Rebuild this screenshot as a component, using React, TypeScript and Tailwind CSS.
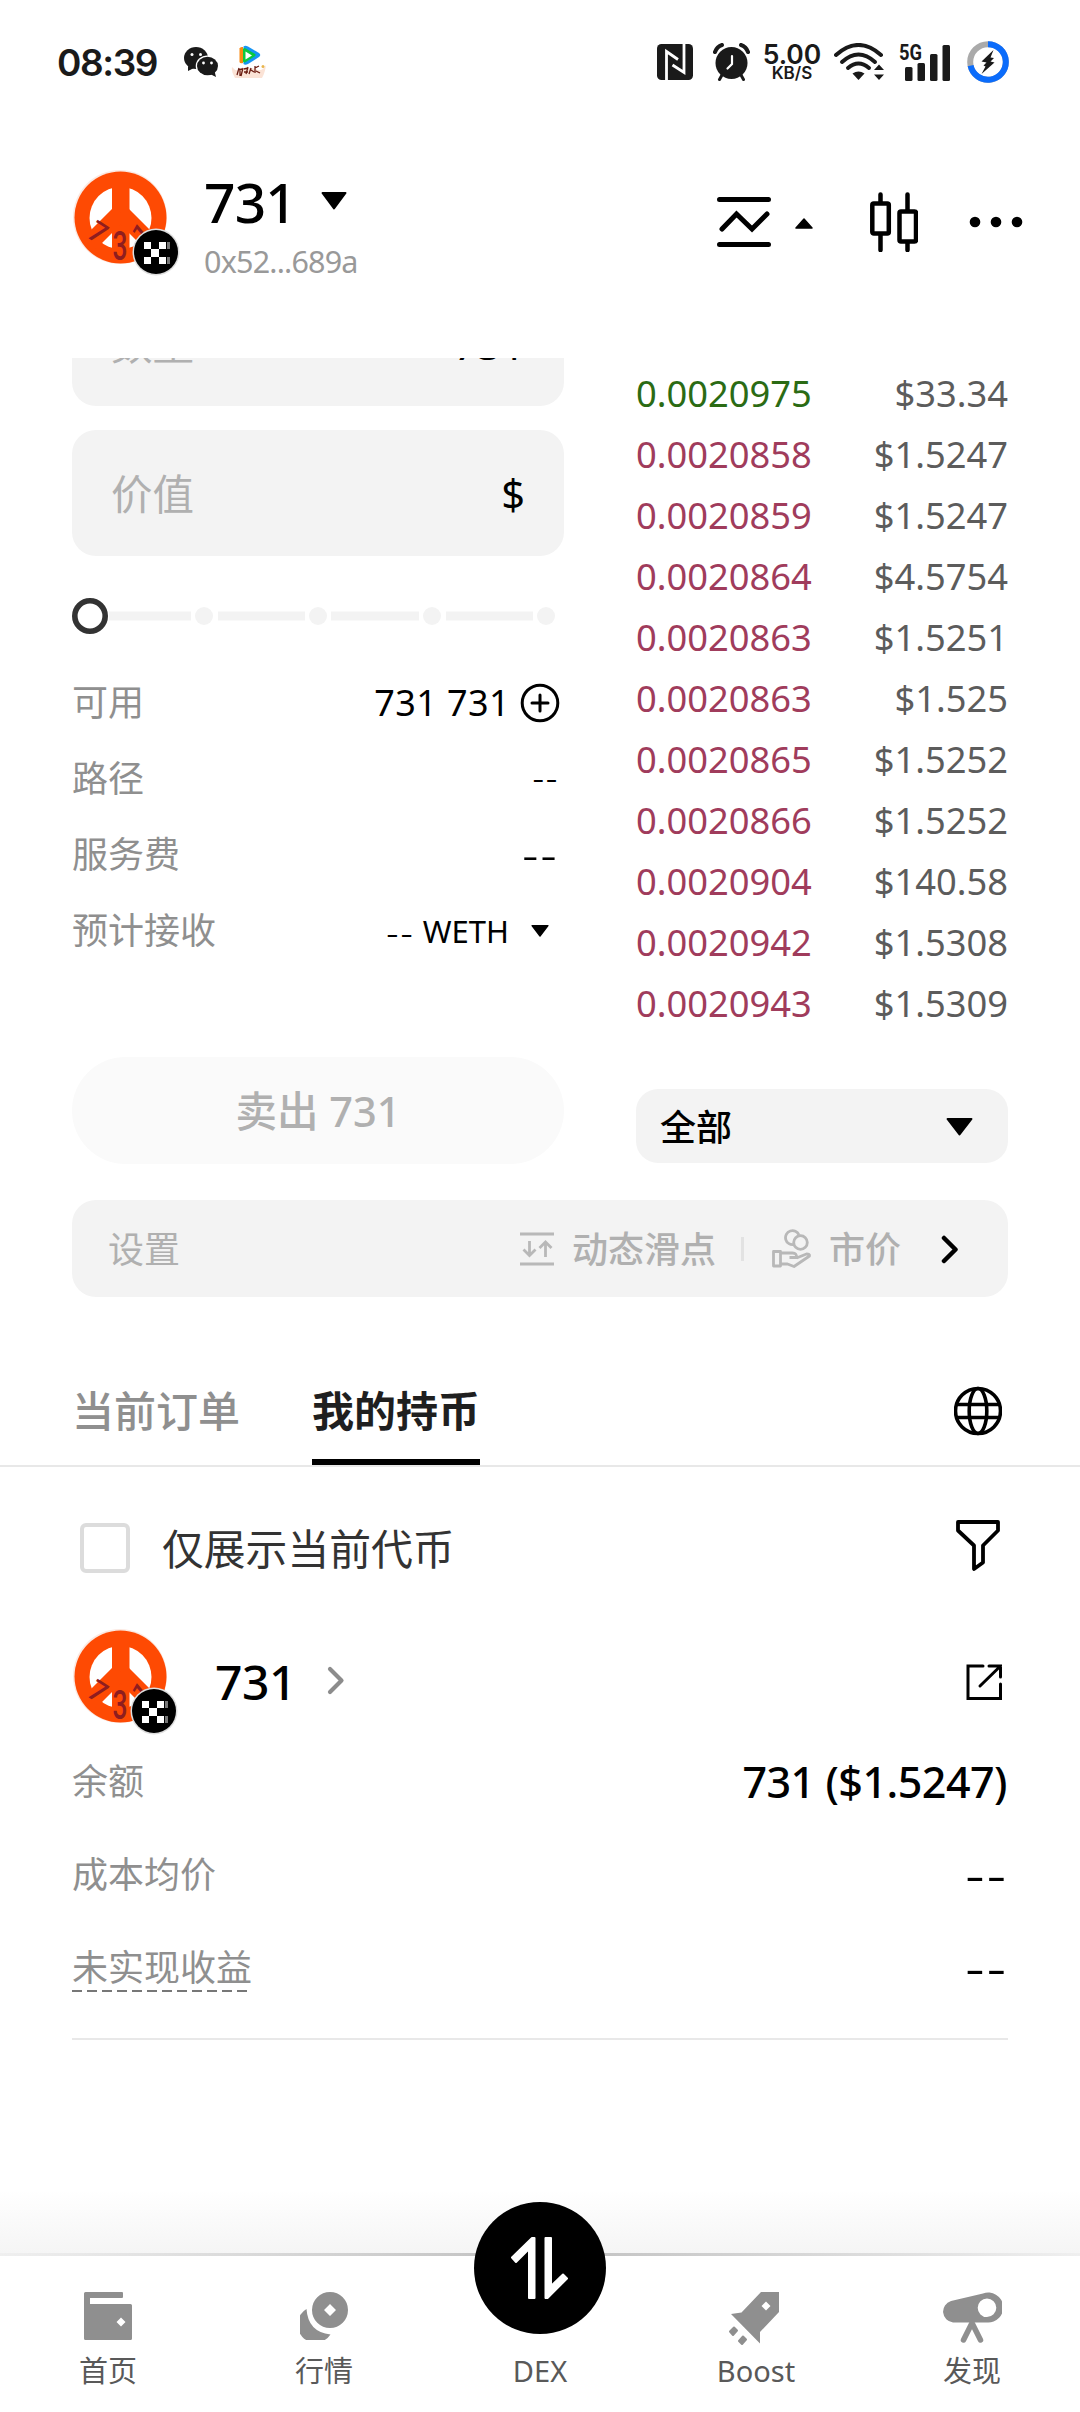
import React, { useState } from "react";

const orders = [
  { price: "0.0020975", value: "$33.34", side: "buy" },
  { price: "0.0020858", value: "$1.5247", side: "sell" },
  { price: "0.0020859", value: "$1.5247", side: "sell" },
  { price: "0.0020864", value: "$4.5754", side: "sell" },
  { price: "0.0020863", value: "$1.5251", side: "sell" },
  { price: "0.0020863", value: "$1.525", side: "sell" },
  { price: "0.0020865", value: "$1.5252", side: "sell" },
  { price: "0.0020866", value: "$1.5252", side: "sell" },
  { price: "0.0020904", value: "$140.58", side: "sell" },
  { price: "0.0020942", value: "$1.5308", side: "sell" },
  { price: "0.0020943", value: "$1.5309", side: "sell" },
];

const Caret = ({ className }: { className: string }) => (
  <svg viewBox="0 0 26 18" className={className} preserveAspectRatio="none">
    <path d="M1.5 1h23L13 16.5z" fill="#000" stroke="#000" strokeWidth="2" strokeLinejoin="round" />
  </svg>
);

// Dash pair used where a value is missing
const Dashes = ({ className }: { className: string }) => (
  <span className={className}>--</span>
);

const TokenLogo = ({ dx = 0 }: { dx?: number }) => (
  <svg width="108" height="108" viewBox="0 0 108 108" className="shrink-0">
    <circle cx="48" cy="47" r="47" fill="#fbe9e2" />
    <circle cx="48.5" cy="47.5" r="46" fill="#fe4a03" />
    <circle cx="48.5" cy="48" r="31" fill="#fff" />
    <path d="M40 10h17.500v74h-17.500z" fill="#fe4a03" />
    <path d="M48.500 42.500L18 73M48.500 42.500L79 73" stroke="#fe4a03" strokeWidth="17" />
    <g fill="#8f1d1f" fontFamily="Roboto, sans-serif" fontWeight="500" textAnchor="middle">
      <text x="0" y="0" fontSize="29" transform="translate(20.500 71) rotate(33)">7</text>
      <text x="48" y="90" fontSize="40" fontWeight="500" textLength="15" lengthAdjust="spacingAndGlyphs">3</text>
      <text x="0" y="0" fontSize="26" transform="translate(75 70) rotate(-40)">1</text>
    </g>
    <circle cx={84 - dx} cy="82" r="23.500" fill="#dedede" />
    <circle cx={84 - dx} cy="82" r="22" fill="#000" />
    <g fill="#fff" transform={`translate(${-dx} 0)`}>
      <rect x="72" y="72" width="7" height="7" />
      <rect x="87" y="72" width="7" height="7" />
      <rect x="79" y="79" width="8" height="8" />
      <rect x="72" y="87" width="7" height="7" />
      <rect x="87" y="87" width="7" height="7" />
      <rect x="95" y="72" width="3" height="7" fill="#777" />
      <rect x="95" y="87" width="3" height="7" fill="#777" />
    </g>
  </svg>
);

const StatusBar = () => (
  <div className="flex h-[124px] items-center pl-[57px] pr-[71px] text-[#1a1a1a]">
    <span className="w-[127px] text-[37px] font-semibold leading-none tracking-[-1.4px] font-['Inter']">08:39</span>
    {/* WeChat */}
    <svg width="35" height="32" viewBox="0 0 35 32">
      <g fill="#1a1a1a">
        <ellipse cx="12" cy="12" rx="12" ry="11" />
        <path d="M4 20l0 5 6-3z" />
        <ellipse cx="23.500" cy="20" rx="11.800" ry="10.500" fill="#fff" />
        <ellipse cx="23.500" cy="20" rx="10.500" ry="9.300" />
        <path d="M26 28l6 3-1.500-6z" />
      </g>
      <g fill="#fff">
        <circle cx="8" cy="8.500" r="1.500" />
        <circle cx="16.500" cy="8.500" r="1.500" />
        <circle cx="19.500" cy="17" r="1.400" />
        <circle cx="27.500" cy="17" r="1.400" />
      </g>
    </svg>
    {/* video app */}
    <svg width="36" height="34" viewBox="0 0 36 34" className="ml-3">
      <path d="M8.500 3.500Q9 1.500 12 2v16Q9 19 8.500 17z" fill="#f98a12" />
      <path d="M12.500 1.500Q14 0 17 1.500L28 8q2.500 2 0 4L17 19q-3 1.500-4.500 0z" fill="#1795f5" />
      <path d="M13.500 4.500L23 10 13.500 16z" fill="#0bc93e" stroke="#0bc93e" strokeWidth="3" strokeLinejoin="round" />
      <path d="M14.500 6.500l6.500 4-6.500 4z" fill="#fff" />
      <path d="M1 22q4 5 8 3 9-4 18 0 5 1 8-5-1 8-4 13H4Q0 27 1 22z" fill="#fbe3d6" />
      <path d="M8 23l-2 7m1-5l4-1m-2 0v7m3-8l-2 8m3-7l4-1m-4 4h4m0-5l-2 7m5-6l-2 6m2-4l3 2m1-6v7m0-5l4-2m-3 5l4 2" stroke="#6b1d12" strokeWidth="1.300" fill="none" />
      <circle cx="32" cy="21.500" r="1.500" fill="#e8b54d" />
    </svg>
    <div className="ml-auto flex items-center">
      {/* NFC */}
      <svg width="36" height="36" viewBox="0 0 36 36">
        <rect width="36" height="36" rx="4.500" fill="#1a1a1a" />
        <path d="M9.500 36V7.500L21 15.500M27 0V28.500L15.500 21" stroke="#fff" strokeWidth="2.800" fill="none" />
      </svg>
      {/* alarm */}
      <svg width="37" height="38" viewBox="0 0 37 38" className="ml-5">
        <circle cx="18.500" cy="20" r="16" fill="#1a1a1a" />
        <path d="M2 9Q4 3.500 9 2M35 9Q33 3.500 28 2" stroke="#1a1a1a" strokeWidth="4" strokeLinecap="round" fill="none" />
        <path d="M9 32l-2.500 4.500M28 32l2.500 4.500" stroke="#1a1a1a" strokeWidth="3" strokeLinecap="round" />
        <path d="M19 13v8l-4.500 4.500" stroke="#fff" strokeWidth="2.200" strokeLinecap="round" fill="none" />
      </svg>
      <div className="ml-3 flex w-[60px] flex-col items-center font-semibold font-['Inter']">
        <span className="text-[26.500px] leading-[22px]">5.00</span>
        <span className="text-[17px] leading-[17px]">KB/S</span>
      </div>
      {/* wifi */}
      <svg width="51" height="38" viewBox="0 0 51 38" className="ml-3">
        <g fill="none" stroke="#1a1a1a" strokeWidth="4" strokeLinecap="round">
          <path d="M2 12Q24.500 -8 47 12" />
          <path d="M8 19Q24.500 4 41 19" />
          <path d="M14 25Q24.500 16 35 25" />
        </g>
        <path d="M18.500 30.500Q24.500 26.500 30.500 30.500L24.500 37z" fill="#1a1a1a" />
        <path d="M40 27l5-5.500 5 5.500zM40 31.500h10l-5 5.500z" fill="#1a1a1a" />
      </svg>
      {/* signal */}
      <svg width="52" height="38" viewBox="0 0 52 38" className="ml-3.5 overflow-visible">
        <text x="0" y="17" fontSize="22" fontWeight="700" fontFamily="Roboto" textLength="23" lengthAdjust="spacingAndGlyphs" fill="#1a1a1a">5G</text>
        <g fill="#1a1a1a">
          <rect x="6" y="24" width="7.500" height="14" rx="1.500" />
          <rect x="18.500" y="20" width="7.500" height="18" rx="1.500" />
          <rect x="31" y="11" width="7.500" height="27" rx="1.500" />
          <rect x="43.500" y="2" width="7.500" height="36" rx="1.500" />
        </g>
      </svg>
      {/* battery */}
      <svg width="42" height="42" viewBox="0 0 42 42" className="ml-4">
        <circle cx="21" cy="21" r="17.800" fill="none" stroke="#aaa" strokeWidth="6" />
        <path d="M21 3.200A17.800 17.800 0 1 1 3.600 24.700" fill="none" stroke="#0b6cfb" strokeWidth="6" />
        <path d="M26.500 9L14.500 20.500l5 1-3 3 2 1-4 7.500L27.500 21.500l-4-1 3.500-3.500-3.500-.5z" fill="#1a1a1a" />
      </svg>
    </div>
  </div>
);

const Header = () => (
  <div className="flex h-[234px] items-start pl-[72px] pr-[57px] pt-[46px]">
    <TokenLogo />
    <div className="ml-6 flex flex-col">
      <div className="flex h-[62px] items-center">
        <span className="text-[55px] font-medium leading-none tracking-[-0.8px]">731</span>
        <Caret className="ml-[25px] h-[18px] w-[26px]" />
      </div>
      <span className="mt-[10px] text-[30.500px] leading-[38px] tracking-[-0.8px] text-[#999]">0x52...689a</span>
    </div>
    <div className="ml-auto flex pt-[22px]">
      <svg width="54" height="60" viewBox="0 0 54 60" fill="none" stroke="#000" strokeWidth="5" strokeLinecap="round">
        <path d="M2.500 7.500h49M2.500 52.500h49" />
        <path d="M5 37L19.500 22 35 37 50 22" strokeLinejoin="miter" />
      </svg>
      <svg width="18" height="11" viewBox="0 0 18 11" className="ml-6 mt-[26px]">
        <path d="M1 10h16L9 1z" stroke="#000" strokeLinejoin="round" strokeWidth="1.500" />
      </svg>
      <svg width="48" height="60" viewBox="0 0 48 60" className="ml-[57px]" fill="none" stroke="#000" strokeWidth="4.500" strokeLinecap="round">
        <rect x="2.300" y="11.500" width="16.500" height="30" rx="1.500" />
        <rect x="29.500" y="19.500" width="16.500" height="30" rx="1.500" />
        <path d="M10.500 2.500v8M10.500 43v15M37.500 2.500v16M37.500 51v7" />
      </svg>
      <svg width="54" height="12" viewBox="0 0 54 12" className="ml-[51px] mt-6">
        <circle cx="6" cy="6" r="5.300" />
        <circle cx="27" cy="6" r="5.300" />
        <circle cx="48" cy="6" r="5.300" />
      </svg>
    </div>
  </div>
);

const InputBox = ({ label, unit }: { label: string; unit: string }) => (
  <div className="flex h-[126px] items-center justify-between rounded-[24px] bg-[#f3f3f3] pl-[39px] pr-[39px] pt-[3px] text-[41.500px]">
    <span className="leading-none text-[#b0b0b0]">{label}</span>
    <span className="leading-none text-black">{unit}</span>
  </div>
);

const Slider = () => (
  <svg width="492" height="40" viewBox="0 0 492 40" className="mt-10">
    <g fill="#f3f3f3">
      <rect x="37" y="15.500" width="82" height="9" />
      <rect x="146" y="15.500" width="87" height="9" />
      <rect x="259" y="15.500" width="88" height="9" />
      <rect x="374" y="15.500" width="87" height="9" />
      <circle cx="132" cy="20" r="9" />
      <circle cx="246" cy="20" r="9" />
      <circle cx="360" cy="20" r="9" />
      <circle cx="474" cy="20" r="9" />
    </g>
    <circle cx="18" cy="20" r="15.200" fill="#fff" stroke="#333" strokeWidth="5.600" />
  </svg>
);

const TradeForm = () => (
  <div className="flex w-[492px] flex-col">
    <div className="-mt-[78px] flex flex-col gap-6">
      <InputBox label="数量" unit="731" />
      <InputBox label="价值" unit="$" />
    </div>
    <Slider />
    <div className="mt-[29px] flex flex-col text-[36px] leading-[76px] text-[#8f8f8f]">
      <div className="flex h-[76px] items-center justify-between">
        <span>可用</span>
        <span className="flex items-center pr-1 text-black">
          <span className="tracking-[0.400px]">731 731</span>
          <svg width="40" height="40" viewBox="0 0 40 40" className="ml-[10px]" fill="none" stroke="#000" strokeWidth="3" strokeLinecap="round">
            <circle cx="20" cy="20" r="17.800" />
            <path d="M12 20h16M20 12v16" />
          </svg>
        </span>
      </div>
      <div className="flex h-[76px] items-center justify-between">
        <span>路径</span>
        <Dashes className="pr-[5px] pb-[3px] text-[36px] font-light tracking-[1.700px] text-black" />
      </div>
      <div className="flex h-[76px] items-center justify-between">
        <span>服务费</span>
        <Dashes className="pr-[5px] pb-[4px] text-[50px] font-light tracking-[2.300px] text-black" />
      </div>
      <div className="flex h-[76px] items-center justify-between">
        <span>预计接收</span>
        <span className="flex items-center pr-[15px] text-[31px] text-black">
          <Dashes className="mr-[8px] text-[38px] font-light tracking-[2px]" />
          WETH
          <Caret className="ml-[22px] h-[12px] w-[18px]" />
        </span>
      </div>
    </div>
    <button className="mt-[88px] h-[107px] rounded-full bg-[#fafafa] pt-[2px] text-[41.500px] font-medium leading-none text-[#b0b0b0]">
      卖出 731
    </button>
  </div>
);

const OrderBook = () => (
  <div className="flex w-[372px] flex-col pt-[5px]">
    {orders.map((o, i) => (
      <div key={i} className="flex h-[61px] items-center justify-between text-[36.300px] leading-none">
        <span className={o.side === "buy" ? "text-[#2b6b14]" : "text-[#a03c5c]"}>{o.price}</span>
        <span className="text-[#5c5c5c]">{o.value}</span>
      </div>
    ))}
    <div className="mt-[55px] flex h-[74px] items-center justify-between rounded-[22px] bg-[#f3f3f3] pl-6 pr-[35px] text-[36px] font-medium leading-none">
      <span className="pt-[3px]">全部</span>
      <Caret className="mt-[2px] h-[18px] w-[27px]" />
    </div>
  </div>
);

const SettingsBar = () => (
  <div className="mx-[72px] mt-9 flex h-[97px] items-center rounded-[24px] bg-[#f3f3f3] pl-9 text-[36px] leading-none text-[#b0b0b0]">
    <span className="pt-[2px]">设置</span>
    <svg width="34" height="36" viewBox="0 0 34 36" className="ml-auto" fill="none" stroke="#b8b8b8" strokeWidth="2.800">
      <path d="M0 3h34M0 33h34M9.500 10v14M3.500 18.500l6 6 6-6M25.500 26V11M19.500 17l6-6 6 6" />
    </svg>
    <span className="ml-[18px] pt-[2px] font-medium">动态滑点</span>
    <span className="ml-[25px] h-6 w-[3px] bg-[#e2e2e2]" />
    <svg width="40" height="40" viewBox="0 0 40 40" className="ml-[28px]" fill="none" stroke="#b8b8b8" strokeWidth="2.800" strokeLinejoin="round">
      <path d="M22 15.500A7 7 0 1 1 27 6" />
      <circle cx="28.500" cy="13.500" r="6.800" />
      <path d="M1.500 22.500h7v14.500h-7zM8.500 24h12q4.500 0 4 4.500h-7M24.500 29l10-4q3.500 0 3 2L22 37.500 15.500 35h-7" />
    </svg>
    <span className="ml-[17px] pt-[2px] font-medium">市价</span>
    <svg width="18" height="30" viewBox="0 0 18 30" className="ml-[40px] mr-[49px]" fill="none" stroke="#000" strokeWidth="4.500" strokeLinecap="round" strokeLinejoin="round">
      <path d="M3 4l11.500 11.500L3 27" />
    </svg>
  </div>
);

const Tabs = () => (
  <div className="mt-[69px] flex h-[101px] items-start border-b-2 border-[#e8e8e8] pl-[72px] pr-[78px] text-[42px] leading-[90px]">
    <span className="font-medium text-[#8f8f8f]">当前订单</span>
    <span className="ml-[72px] h-[99px] border-b-[6px] border-black font-bold text-[#1f1f1f]">我的持币</span>
    <svg width="48" height="50" viewBox="0 0 48 50" className="ml-auto mt-5" fill="none" stroke="#000" strokeWidth="3.600">
      <circle cx="24" cy="25" r="22.500" />
      <ellipse cx="24" cy="25" rx="8.800" ry="22.500" />
      <path d="M3 18.500h42M3 31.500h42" />
    </svg>
  </div>
);

const Holdings = () => {
  const [onlyCurrent, setOnlyCurrent] = useState(false);
  return (
    <div className="flex flex-col px-[72px]">
      <div className="flex h-[162px] items-center">
        <button
          onClick={() => setOnlyCurrent(!onlyCurrent)}
          className="ml-2 size-[50px] rounded-[6px] border-[4px] border-[#dcdcdc]"
        />
        <span className="ml-8 pt-[2px] text-[41.800px] leading-none text-[#333]">仅展示当前代币</span>
        <svg width="46" height="52" viewBox="0 0 46 52" className="ml-auto mr-[7px] mb-[6px]" fill="none" stroke="#000" strokeWidth="3.800" strokeLinejoin="round">
          <path d="M3 3h40v8.500L28 26.500v17l-9 6.500V26.500L3 11.500z" />
        </svg>
      </div>
      <div className="flex h-[112px] items-start">
        <TokenLogo dx={2} />
        <span className="ml-[35px] mt-[29px] text-[48px] font-medium leading-none tracking-[-0.5px]">731</span>
        <svg width="18" height="30" viewBox="0 0 18 30" className="ml-[31px] mt-9" fill="none" stroke="#8c8c8c" strokeWidth="4.200" strokeLinecap="round" strokeLinejoin="round">
          <path d="M3 4l11.500 11.500L3 27" />
        </svg>
        <svg width="38" height="38" viewBox="0 0 38 38" className="ml-auto mr-[5px] mt-[34px]" fill="none" stroke="#000" strokeWidth="3" strokeLinecap="round">
          <path d="M18 3H3v32.500h32.500V21M24 3h11.500v11M35.500 3L15 23" />
        </svg>
      </div>
      <div className="flex h-[78px] items-center justify-between">
        <span className="pt-[3px] text-[36px] leading-none text-[#8f8f8f]">余额</span>
        <span className="pr-[1px] pt-[2px] text-[43px] font-medium leading-none tracking-[-0.5px]">731 ($1.5247)</span>
      </div>
      <div className="mt-[15px] flex h-[78px] items-center justify-between">
        <span className="pt-[3px] text-[36px] leading-none text-[#8f8f8f]">成本均价</span>
        <Dashes className="text-[60px] font-light leading-none tracking-[2px]" />
      </div>
      <div className="mt-[15px] flex h-[78px] items-center justify-between">
        <span className="relative pt-[3px] text-[36px] leading-none text-[#8f8f8f]">
          未实现收益
          <svg width="176" height="2" viewBox="0 0 176 2" className="absolute -bottom-[6px] left-0">
            <path d="M0 1h176" stroke="#777" strokeWidth="2" strokeDasharray="10 5" />
          </svg>
        </span>
        <Dashes className="text-[60px] font-light leading-none tracking-[2px]" />
      </div>
      <div className="mt-[33px] h-[2px] bg-[#e8e8e8]" />
    </div>
  );
};

const NavItem = ({ label, children }: { label: string; children?: React.ReactNode }) => (
  <div className="flex w-[216px] flex-col items-center">
    <div className="h-[52px] pt-[1px]">{children}</div>
    <span className="mt-[9px] text-[29px] leading-[38px] text-[#595959]">{label}</span>
  </div>
);

const BottomNav = () => (
  <div className="relative">
    <div className="h-[63px] bg-gradient-to-b from-white to-[#f5f5f5]" />
    <div className="h-[3px] bg-gradient-to-r from-[#efefef] via-[#c0c0c0] to-[#efefef]" />
    <div className="flex h-[156px] bg-white pt-[35px]">
      <NavItem label="首页">
        <svg width="48" height="48" viewBox="0 0 48 48">
          <path fillRule="evenodd" d="M1.500 0H38q1 0 1 1v4q0 1-1 1H6v6H46.500q1.500 0 1.500 1.500v33q0 1.500-1.500 1.500h-45Q0 48 0 46.500v-45Q0 0 1.500 0zM37 25.500L32.500 30l4.500 4.500 4.500-4.500z" fill="#8f8f8f" />
        </svg>
      </NavItem>
      <NavItem label="行情">
        <svg width="48" height="48" viewBox="0 0 48 48">
          <path d="M6.500 17Q8 40 30.500 42.500A18 18 0 1 1 6.500 17z" fill="#8f8f8f" />
          <path fillRule="evenodd" d="M30 0a18 18 0 1 1 0 36 18 18 0 0 1 0-36zM30 12l-6 6 6 6 6-6z" fill="#8f8f8f" />
        </svg>
      </NavItem>
      <NavItem label="DEX" />
      <NavItem label="Boost">
        <svg width="54" height="54" viewBox="0 0 54 54" fill="#8f8f8f" className="-ml-1">
          <path fillRule="evenodd" d="M34 0h18v20L33 40v11.500L4 22l10.500-1.500zM39 9.500L34.500 14l4.500 4.500L43.500 14z" />
          <path d="M7 35.500l3 3-4 4.500L3 39.500zM16 44.500l3 3-4 4.500-3-3z" stroke="#8f8f8f" strokeWidth="2" strokeLinejoin="round" />
        </svg>
      </NavItem>
      <NavItem label="发现">
        <svg width="60" height="52" viewBox="0 0 60 52" fill="#8f8f8f">
          <path fillRule="evenodd" d="M9 9L41 1.500a15 15 0 1 1 4 29H11A11 11 0 0 1 9 9zM45 6.500a9.300 9.300 0 1 0 0 18.600 9.300 9.300 0 0 0 0-18.600z" />
          <path d="M21.500 48L30 31l8.500 17" fill="none" stroke="#8f8f8f" strokeWidth="5.500" strokeLinecap="round" strokeLinejoin="round" />
        </svg>
      </NavItem>
    </div>
    {/* floating DEX button sits over the bar */}
    <div className="absolute left-[474px] top-[12px] flex size-[132px] items-center justify-center rounded-full bg-black">
      <svg width="60" height="66" viewBox="0 0 60 66" fill="#fff" stroke="#fff" strokeWidth="2" strokeLinejoin="round">
        <path d="M24.500 3v60h-5.500V14L6 27l-4-4.500L22 3z" />
        <path d="M35.500 63V3h5.500v48l12-11.500 4 4L37.500 63z" />
      </svg>
    </div>
  </div>
);

const App = () => {
  return (
    <div className="flex h-[2412px] w-[1080px] flex-col overflow-hidden bg-white text-black font-['Noto_Sans','Noto_Sans_CJK_SC',sans-serif]">
      <StatusBar />
      <Header />
      <div className="flex h-[806px] shrink-0 justify-between overflow-hidden px-[72px]">
        <TradeForm />
        <OrderBook />
      </div>
      <SettingsBar />
      <Tabs />
      <Holdings />
      <div className="mt-auto">
        <BottomNav />
      </div>
    </div>
  );
};

export default App;
